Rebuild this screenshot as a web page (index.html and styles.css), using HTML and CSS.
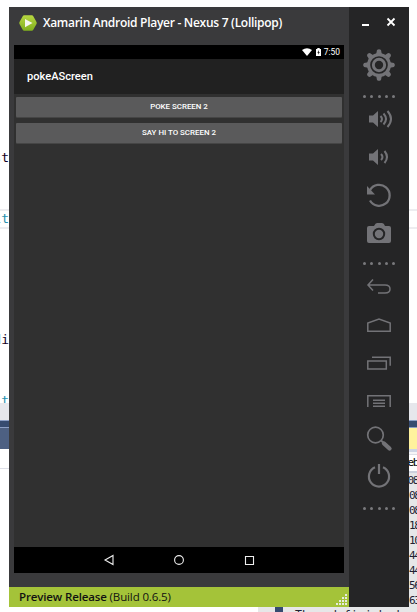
FILE: index.html
```html
<!DOCTYPE html>
<html lang="en">
<head>
<meta charset="utf-8">
<title>Xamarin Android Player</title>
<link rel="stylesheet" href="styles.css">
</head>
<body>
<div class="desktop">
  <div class="editor-left">
    <div class="code-area">
      <div class="code first">st</div>
      <div class="code current teal">it</div>
      <div class="code third">di</div>
      <div class="code last teal">it</div>
    </div>
    <div class="scrollbar"></div>
    <div class="divider"></div>
    <div class="panel-title"></div>
    <div class="panel-line"></div>
  </div>
  <div class="window">
    <main class="player">
      <header class="titlebar">
        <svg class="logo" viewBox="0 0 18 16"><defs><linearGradient id="g" x2="0" y2="1"><stop stop-color="#b7d641"/><stop offset="1" stop-color="#80b01d"/></linearGradient></defs><path d="M5.2.3h7.6q1 0 1.5.9l3.2 5.9q.5.9 0 1.8l-3.2 5.9q-.5.9-1.5.9H5.2q-1 0-1.5-.9L.5 8.9Q0 8 .5 7.100L3.700 1.200Q4.200.3 5.200.3z" fill="url(#g)"/><path d="M6 4v8.200l7.500-4.100z" fill="#f4f6ec"/></svg>
        <h1>Xamarin Android Player - Nexus 7 (Lollipop)</h1>
      </header>
      <section class="screen">
        <div class="status">
          <svg class="wifi" viewBox="0 0 10 8"><path d="M0 2q5-3.500 10 0L5 8z" fill="#fff"/></svg>
          <svg class="battery" viewBox="0 0 5 8"><path d="M0 1h1.300V0h2.400v1H5v7H0z" fill="#fff"/><path d="M3 2L1.300 4.700h1L2 6.800l1.800-2.700h-1z" fill="#111"/></svg>
          <span>7:50</span>
        </div>
        <div class="appbar">pokeAScreen</div>
        <div class="content">
          <button>POKE SCREEN 2</button>
          <button>SAY HI TO SCREEN 2</button>
        </div>
        <nav class="navbar">
          <svg viewBox="0 0 12 12"><path d="M10 1.500v9L2 6z"/></svg>
          <svg viewBox="0 0 12 12"><circle cx="6" cy="6" r="4.400"/></svg>
          <svg viewBox="0 0 12 12"><path d="M2.500 2.500h8v8h-8z"/></svg>
        </nav>
      </section>
      <footer><span><b>Preview Release</b> (Build 0.6.5)</span>
        <svg class="grip" viewBox="0 0 12 12"><path d="M9 0h2v2H9zM6 3h2v2H6zM9 3h2v2H9zM3 6h2v2H3zM6 6h2v2H6zM9 6h2v2H9zM0 9h2v2H0zM3 9h2v2H3zM6 9h2v2H6zM9 9h2v2H9z"/></svg>
      </footer>
    </main>
    <aside class="sidebar">
      <div class="controls">
        <svg viewBox="0 0 10 10"><path d="M1 8h7" stroke="#fff" stroke-width="2"/></svg>
        <svg viewBox="0 0 10 10"><path d="M1.500 1.500l7 7M8.500 1.500l-7 7" stroke="#fff" stroke-width="1.800"/></svg>
      </div>
      <svg class="gear" viewBox="0 0 32 32"><g fill="#737377"><circle cx="16" cy="16" r="12"/><path id="tooth" d="M13.200 5L14 1.100Q16-.8 18 1.100L18.800 5zM13.200 27l.8 3.900q2 1.900 4 0l.8-3.900z"/><use href="#tooth" transform="rotate(45 16 16)"/><use href="#tooth" transform="rotate(90 16 16)"/><use href="#tooth" transform="rotate(135 16 16)"/></g><circle cx="16" cy="16" r="8" fill="#737377" stroke="#252526" stroke-width="1.700"/><circle cx="16" cy="16" r="4.200" fill="#252526"/></svg>
      <div class="dots"><i></i><i></i><i></i><i></i><i></i></div>
      <svg class="tool" viewBox="0 0 32 38"><path d="M6 15.500h4l5-4.500v16l-5-4.500H6z" fill="#737377"/><path d="M17.500 16q3 3 0 6M20.500 13.500q5 5.500 0 11M24.500 11q7 8 0 16" fill="none" stroke="#737377" stroke-width="2"/></svg>
      <svg class="tool" viewBox="0 0 32 38"><path d="M6 15.500h4l5-4.500v16l-5-4.500H6z" fill="#737377"/><path d="M18 16q3 3 0 6M21.500 13q5 6 0 12" fill="none" stroke="#737377" stroke-width="2"/></svg>
      <svg class="tool" viewBox="0 0 32 38"><path d="M7.100 14A10.500 10.500 0 1 1 7 24.500" fill="none" stroke="#737377" stroke-width="2.300"/><path d="M4 10v8.500h8z" fill="#737377"/></svg>
      <svg class="tool" viewBox="0 0 32 38"><path d="M6 12h5q1.500-3 3-3h5q2 0 3 3h4q2 0 2 2v13q0 2-2 2H6q-2 0-2-2V14q0-2 2-2z" fill="#737377"/><circle cx="16" cy="20" r="5.200" fill="none" stroke="#252526" stroke-width="2"/></svg>
      <div class="dots second"><i></i><i></i><i></i><i></i><i></i></div>
      <svg class="tool line" viewBox="0 0 32 38"><path d="M10 12.500l-5 5.500 5 5.500M5 18h17q5 0 5 4t-5 4h-7"/></svg>
      <svg class="tool line" viewBox="0 0 32 38"><path d="M4.800 26.300v-8.200L16 14l11.200 4.100v8.200z"/></svg>
      <svg class="tool line" viewBox="0 0 32 38"><path d="M4.800 18h18.500v8H4.800zM9 14.300h18.200v8.500"/></svg>
      <svg class="tool line" viewBox="0 0 32 38"><path d="M4.800 26V14.700h22.400V26M10 19.300h12M10 22.300h12M10 25.300h12"/></svg>
      <svg class="tool" viewBox="0 0 32 38"><circle cx="12.500" cy="16" r="7.800" fill="none" stroke="#737377" stroke-width="1.700"/><path d="M18 21.500l4 3.500" stroke="#737377" stroke-width="2"/><path d="M21 24.500l5.500 5" stroke="#737377" stroke-width="4.300" stroke-linecap="round"/></svg>
      <svg class="tool" viewBox="0 0 32 38"><path d="M12 10.200a10.100 10.100 0 1 0 8 0M16 7v10" fill="none" stroke="#737377" stroke-width="2.200"/></svg>
      <div class="dots final"><i></i><i></i><i></i><i></i><i></i></div>
    </aside>
  </div>
  <div class="editor-right">
    <div class="current-edge"></div>
    <div class="scrollbar"></div>
    <div class="divider"></div>
    <div class="active-tab"></div>
    <div class="tab-edge"></div>
    <div class="debug">eb</div>
    <div class="output">08<br>08<br>08<br>18<br>10<br>44<br>44<br>56<br>63</div>
  </div>
  <div class="output-bottom"><div class="marker"></div><div class="message">Thread finished:</div></div>
</div>
</body>
</html>
```
FILE: styles.css
```css
* { box-sizing: border-box; }
body { margin: 0; background: #fff; overflow: hidden; font-family: "Open Sans", sans-serif; }
svg { display: block; flex: none; }
.desktop { width: 417px; height: 612px; display: grid; grid-template-columns: 9px 400px 8px; grid-template-rows: 607px 5px; }
.editor-left, .editor-right { overflow: hidden; display: flex; flex-direction: column; }
.editor-left > *, .editor-right > * { flex: none; }
.code, .editor-right, .message { font: 13px/18px "DejaVu Sans Mono", monospace; }
.code-area { height: 403px; overflow: hidden; padding-top: 149px; }
.code { width: 9px; height: 18px; overflow: hidden; display: flex; justify-content: flex-end; color: #102; }
.code.current { margin-top: 42px; height: 20px; border: solid #ededf0; border-width: 2px 0; line-height: 16px; }
.code.third { margin-top: 102px; }
.code.last { margin-top: 43px; }
.code.teal { color: #2b91af; }
.scrollbar { height: 17px; background: #e6e7ec; }
.divider { height: 8px; background: #364b70; border: solid #8c9fc5; border-width: 1px 0; }
.panel-title { height: 21px; background: #4d6082; }
.panel-line { height: 20px; border-bottom: 1px solid #dddfe7; }
.window { margin-top: 7px; height: 600px; display: flex; }
.player { width: 340px; background: #3a3a3c; display: flex; flex-direction: column; }
.titlebar { height: 38px; padding: 0 0 7px 10px; display: flex; align-items: center; }
.logo { width: 18px; height: 16px; }
h1 { margin: 0 0 0 6px; font-size: 12px; line-height: 16px; font-weight: 600; color: #fff; white-space: nowrap; letter-spacing: -.28px; }
.screen { width: 330px; height: 528px; margin: 0 5px; background: #303030; display: flex; flex-direction: column; font-family: Roboto, sans-serif; color: #fff; }
.status { height: 14px; background: #000; display: flex; align-items: center; justify-content: flex-end; padding-right: 4px; font-size: 8.400px; line-height: 14px; }
.wifi { width: 10px; height: 8px; margin-right: 4px; }
.battery { width: 5px; height: 8px; margin-right: 3px; }
.appbar { height: 35px; background: #212121; padding-left: 13px; line-height: 35px; font-size: 11.100px; font-weight: 500; }
.content { flex: 1; padding: 3px 2px; display: flex; flex-direction: column; gap: 6px; }
button { height: 20px; border: 0; border-radius: 1px; padding: 0; background: #5a5a5b; box-shadow: 0 1px #454545; color: #fff; font: 500 7.900px/20px Roboto, sans-serif; }
.navbar { height: 26px; background: #000; display: flex; justify-content: center; align-items: center; gap: 58px; }
.navbar svg { width: 12px; height: 12px; fill: none; stroke: #eee; stroke-width: 1.100; }
footer { height: 20px; margin-top: 14px; background: #a4c339; padding: 0 1px 0 10px; display: flex; justify-content: space-between; align-items: center; font-size: 11.500px; line-height: 20px; letter-spacing: -.13px; color: #111; }
footer b { font-weight: 600; }
.grip { width: 12px; height: 12px; margin-top: 5px; fill: #e7ebdf; }
.sidebar { width: 60px; background: #252526; display: flex; flex-direction: column; align-items: center; }
.sidebar > * { flex: none; }
.controls { height: 42px; width: 100%; display: flex; justify-content: flex-end; gap: 15px; padding: 10px 13px 0 0; }
.controls svg { width: 10px; height: 10px; }
.gear { width: 32px; height: 32px; }
.dots { height: 20px; width: 32px; padding: 14px 0 0; display: flex; justify-content: space-between; }
.dots i { width: 3px; height: 3px; border-radius: 50%; background: #79797c; }
.dots.second { height: 15px; padding-top: 9px; }
.dots.final { padding-top: 11px; }
.tool { width: 32px; height: 38px; margin-top: -1px; margin-bottom: 1px; }
.line { fill: none; stroke: #737377; stroke-width: 1.500; }
.current-edge { height: 20px; margin: 209px 0 174px; border: solid #ededf0; border-width: 2px 0; }
.active-tab { height: 21px; background: #fff29d; }
.tab-edge { height: 6px; border-top: 3px solid #cfd6e6; border-bottom: 1px solid #dddfe7; background: #f5f5f7; }
.editor-right .debug { height: 18px; background: #fff; border-bottom: 2px solid #ccd1dd; font-size: 11px; line-height: 16px; letter-spacing: -1.400px; text-indent: -1.500px; }
.output { height: 134px; background: #e6e7e8; font-size: 11px; line-height: 15px; letter-spacing: -1.400px; text-indent: -1.500px; color: #223; overflow: hidden; }
.output-bottom { grid-column: 1 / -1; height: 5px; margin-left: 258px; padding-left: 17px; background: #e6e7e8; display: flex; overflow: hidden; }
.marker { width: 8px; background: #364b70; }
.message { margin: 1px 0 0 12px; height: 15px; font-size: 11.600px; line-height: 15px; white-space: nowrap; color: #223; }
```
